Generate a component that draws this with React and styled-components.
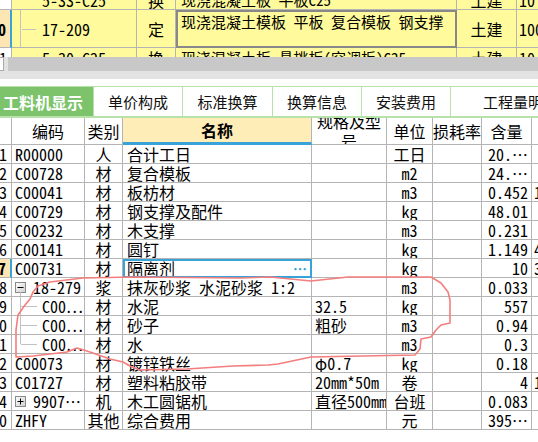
import React from 'react';
import styled, { createGlobalStyle, css } from 'styled-components';

const Global = createGlobalStyle`
  html, body { margin: 0; padding: 0; background: #fff; overflow: hidden; }
  body {
    font-family: "Noto Sans Mono CJK SC", "Noto Sans CJK SC", "DejaVu Sans Mono", monospace;
    font-size: 16px;
    color: #000;
  }
  * { box-sizing: border-box; }
`;

const GRID = '#b4b4b4';
const BLUE = '#38a2d9';

const Page = styled.div`
  position: relative;
  width: 538px;
  height: 442px;
  overflow: hidden;
  background: #fff;
`;

/* ---------- top (quota rows) ---------- */
const TopArea = styled.div`
  height: 57px;
  overflow: hidden;
`;
const TopInner = styled.div`
  margin-top: -10px;
`;
const TopRow = styled.div`
  display: grid;
  grid-template-columns: 12px 125px 39px 281px 60px 80px;
  height: ${p => p.$h}px;
  background: #fffb9c;
`;
const TopCell = styled.div`
  position: relative;
  display: flex;
  align-items: ${p => (p.$top ? 'flex-start' : 'center')};
  justify-content: ${p => (p.$align === 'center' ? 'center' : p.$align === 'right' ? 'flex-end' : 'flex-start')};
  padding: ${p => (p.$top ? '3px 4px' : '0 2px')};
  padding-left: ${p => (p.$pl != null ? p.$pl : 2)}px;
  border-right: 1px solid ${GRID};
  border-bottom: 1px solid ${GRID};
  white-space: nowrap;
  overflow: hidden;
  font-size: ${p => p.$fs || 16}px;
  line-height: 18px;
  ${p => p.$framed && css`
    outline: 2px solid #888;
    outline-offset: -2px;
  `}
`;
const RowNum = styled.div`
  display: flex;
  align-items: center;
  justify-content: flex-end;
  padding-right: 4px;
  white-space: nowrap;
  overflow: hidden;
  background: ${p => (p.$sel ? '#fde6b3' : '#fff')};
  font-weight: ${p => (p.$sel ? 700 : 400)};
  border-right: ${p => (p.$sel ? `2px solid ${BLUE}` : `1px solid ${GRID}`)};
  border-bottom: 1px solid ${GRID};
  line-height: 18px;
`;

/* ---------- scroll bar ---------- */
const HScroll = styled.div`
  display: flex;
  height: 14px;
  background: #e2e2e2;
`;
const ScrollStub = styled.div`
  width: 4px;
  background: #fff;
  border: 1px solid #a8a8a8;
  border-left: none;
`;
const ScrollThumb = styled.div`
  flex: 1;
  margin-left: 4px;
  background: #c8c8c8;
`;
const Band = styled.div`
  height: 8px;
  background: #e3e3e3;
`;
const Gap = styled.div`
  height: 7px;
  background: #fff;
`;

/* ---------- tabs ---------- */
const TabBar = styled.div`
  display: flex;
  height: 32px;
  border-top: 1px solid #b7e3aa;
  border-bottom: 2px solid #b7e3aa;
  white-space: nowrap;
  overflow: hidden;
`;
const Tab = styled.div`
  flex: 0 0 ${p => p.$w}px;
  display: flex;
  align-items: center;
  justify-content: ${p => (p.$active ? 'flex-start' : 'center')};
  padding-left: ${p => (p.$active ? 3 : 0)}px;
  font-family: "Noto Sans CJK SC", sans-serif;
  font-size: ${p => (p.$active ? 16 : 15)}px;
  font-weight: ${p => (p.$active ? 700 : 400)};
  color: ${p => (p.$active ? '#fff' : '#111')};
  background: ${p => (p.$active ? '#7cc36c' : '#fff')};
  border-right: 1px solid #b7e3aa;
`;

/* ---------- material table ---------- */
const COLS = '12px 73px 38px 189px 75px 46px 49px 50px 80px';

const Row = styled.div`
  display: grid;
  grid-template-columns: ${COLS};
  height: ${p => p.$h || 19}px;
`;
const Cell = styled.div`
  position: relative;
  display: flex;
  align-items: center;
  justify-content: ${p => (p.$align === 'center' ? 'center' : p.$align === 'right' ? 'flex-end' : 'flex-start')};
  padding-left: ${p => p.$pl || 0}px;
  padding-right: ${p => p.$pr || 0}px;
  border-right: 1px solid ${GRID};
  border-bottom: 1px solid ${GRID};
  white-space: nowrap;
  overflow: hidden;
  line-height: 18px;
  background: #fff;
`;
const HeadCell = styled(Cell)`
  justify-content: center;
  white-space: ${p => (p.$wrap ? 'normal' : 'nowrap')};
  text-align: center;
  line-height: 20px;
  padding: 0 ${p => (p.$wrap ? 2 : 0)}px;
  ${p => p.$key && css`
    background: #ffedb8;
    font-weight: 700;
    border-bottom: 3px solid ${BLUE};
  `}
`;
const NameCell = styled(Cell)`
  padding-left: 4px;
  justify-content: space-between;
  ${p => p.$sel && css`
    outline: 2px solid ${BLUE};
    outline-offset: -2px;
    padding-right: 4px;
  `}
`;
const MoreDots = styled.span`
  color: ${BLUE};
  font-size: 14px;
  font-weight: 700;
`;
const CodeCell = styled(Cell)`
  padding-left: ${p => (p.$child ? 30 : 3)}px;
  ${p => p.$child && css`
    &::before {
      content: '';
      position: absolute;
      left: 8px;
      top: 0;
      height: ${p.$last ? '50%' : '100%'};
      border-left: 1px solid #c2c2c2;
    }
    &::after {
      content: '';
      position: absolute;
      left: 9px;
      top: 50%;
      width: 16px;
      border-top: 1px solid #c2c2c2;
    }
  `}
  ${p => p.$open && css`
    &::after {
      content: '';
      position: absolute;
      left: 8px;
      top: 14px;
      bottom: 0;
      border-left: 1px solid #c2c2c2;
    }
  `}
`;
const TopCodeCell = styled(TopCell)`
  padding-left: 30px;
  &::before {
    content: '';
    position: absolute;
    left: 8px;
    top: 0;
    bottom: 0;
    border-left: 1px solid #c2c2c2;
  }
  &::after {
    content: '';
    position: absolute;
    left: 10px;
    top: 50%;
    width: 14px;
    border-top: 1px solid #c2c2c2;
  }
`;
const BoxIcon = styled.svg`
  flex: 0 0 11px;
  margin-right: ${p => p.$gap}px;
`;

const Overlay = styled.svg`
  position: absolute;
  left: 0;
  top: 0;
  pointer-events: none;
`;

function ToggleBox({ plus, gap }) {
  return (
    <BoxIcon $gap={gap} width="11" height="11" viewBox="0 0 11 11">
      <defs>
        <linearGradient id={plus ? 'gp' : 'gm'} x1="0" y1="0" x2="1" y2="1">
          <stop offset="0" stopColor="#ffffff" />
          <stop offset="1" stopColor="#cfcfcf" />
        </linearGradient>
      </defs>
      <rect x="0.5" y="0.5" width="10" height="10" fill={`url(#${plus ? 'gp' : 'gm'})`} stroke="#8a8a8a" />
      <line x1="2.5" y1="5.5" x2="8.5" y2="5.5" stroke="#000" />
      {plus && <line x1="5.5" y1="2.5" x2="5.5" y2="8.5" stroke="#000" />}
    </BoxIcon>
  );
}

const rows = [
  { n: '1', code: 'R00000', type: '人', name: '合计工日', spec: '', unit: '工日', qty: '20.⋯' },
  { n: '2', code: 'C00728', type: '材', name: '复合模板', spec: '', unit: 'm2', qty: '24.⋯' },
  { n: '3', code: 'C00041', type: '材', name: '板枋材', spec: '', unit: 'm3', qty: '0.452', next: '1' },
  { n: '4', code: 'C00729', type: '材', name: '钢支撑及配件', spec: '', unit: 'kg', qty: '48.01' },
  { n: '5', code: 'C00232', type: '材', name: '木支撑', spec: '', unit: 'm3', qty: '0.231' },
  { n: '6', code: 'C00141', type: '材', name: '圆钉', spec: '', unit: 'kg', qty: '1.149', next: '4' },
  { n: '7', code: 'C00731', type: '材', name: '隔离剂', spec: '', unit: 'kg', qty: '10', next: '3', sel: true },
  { n: '8', code: '18-279', type: '浆', name: '抹灰砂浆 水泥砂浆 1:2', spec: '', unit: 'm3', qty: '0.033', box: 'minus' },
  { n: '9', code: 'C00⋯', type: '材', name: '水泥', spec: '32.5', unit: 'kg', qty: '557', child: true },
  { n: '10', code: 'C00⋯', type: '材', name: '砂子', spec: '粗砂', unit: 'm3', qty: '0.94', child: true },
  { n: '11', code: 'C00⋯', type: '材', name: '水', spec: '', unit: 'm3', qty: '0.3', child: true, last: true },
  { n: '12', code: 'C00073', type: '材', name: '镀锌铁丝', spec: 'φ0.7', unit: 'kg', qty: '0.18' },
  { n: '13', code: 'C01727', type: '材', name: '塑料粘胶带', spec: '20mm*50m', unit: '卷', qty: '4', next: '1' },
  { n: '14', code: '9907⋯', type: '机', name: '木工圆锯机', spec: '直径500mm', unit: '台班', qty: '0.083', box: 'plus' },
  { n: '20', code: 'ZHFY', type: '其他', name: '综合费用', spec: '', unit: '元', qty: '395⋯' },
];

const tabs = ['工料机显示', '单价构成', '标准换算', '换算信息', '安装费用', '工程量明细'];
const tabW = [94, 89, 90, 89, 89, 140];

const redPath =
  'M30,299 L33,292 L38,286 L50,282 L83,278 L133,277 L240,278 L270,277 L311,281 L348,277 L431,277 ' +
  'L441,283 L448,292 L450,300 L450,323 L441,325 L436,330 L431,337 L421,339 L420,349 L415,355 ' +
  'L311,357 L278,364 L268,365 L233,366 L187,369 L140,370 L130,366 L123,362 L110,359 L87,351 ' +
  'L77,348 L67,352 L33,356 L16,357 L16,330 L18,315 L25,305 L30,299';

export default function App() {
  return (
    <Page>
      <Global />
      <TopArea>
        <TopInner>
          <TopRow $h={20}>
            <RowNum />
            <TopCell $pl={30}>5-33-C25</TopCell>
            <TopCell $align="center">换</TopCell>
            <TopCell $pl={5} $fs={15}>现浇混凝土板 平板C25</TopCell>
            <TopCell $align="center">土建</TopCell>
            <TopCell>10</TopCell>
          </TopRow>
          <TopRow $h={38}>
            <RowNum $sel>10</RowNum>
            <TopCodeCell>17-209</TopCodeCell>
            <TopCell $align="center">定</TopCell>
            <TopCell $top $framed $fs={15} $pl={5}>现浇混凝土模板 平板 复合模板 钢支撑</TopCell>
            <TopCell $align="center">土建</TopCell>
            <TopCell>100</TopCell>
          </TopRow>
          <TopRow $h={20}>
            <RowNum>11</RowNum>
            <TopCell $pl={30}>5-30-C25</TopCell>
            <TopCell $align="center">换</TopCell>
            <TopCell $pl={5} $fs={15}>现浇混凝土板 悬挑板(空调板)C25</TopCell>
            <TopCell $align="center">土建</TopCell>
            <TopCell>10</TopCell>
          </TopRow>
        </TopInner>
      </TopArea>

      <HScroll>
        <ScrollStub />
        <ScrollThumb />
      </HScroll>
      <Band />
      <Gap />

      <TabBar>
        {tabs.map((t, i) => (
          <Tab key={t} $w={tabW[i]} $active={i === 0}>{t}</Tab>
        ))}
      </TabBar>

      <Row $h={27}>
        <HeadCell />
        <HeadCell>编码</HeadCell>
        <HeadCell>类别</HeadCell>
        <HeadCell $key>名称</HeadCell>
        <HeadCell $wrap>规格及型号</HeadCell>
        <HeadCell>单位</HeadCell>
        <HeadCell>损耗率</HeadCell>
        <HeadCell>含量</HeadCell>
        <HeadCell />
      </Row>

      {rows.map((r, i) => (
        <Row key={i}>
          <RowNum $sel={r.sel}>{r.n}</RowNum>
          <CodeCell $child={r.child} $last={r.last} $open={r.box === 'minus'}>
            {r.box && <ToggleBox plus={r.box === 'plus'} gap={7} />}
            {r.code}
          </CodeCell>
          <Cell $align="center">{r.type}</Cell>
          <NameCell $sel={r.sel}>
            <span>{r.name}</span>
            {r.sel && <MoreDots>⋯</MoreDots>}
          </NameCell>
          <Cell $pl={3}>{r.spec}</Cell>
          <Cell $align="center">{r.unit}</Cell>
          <Cell />
          <Cell $align="right" $pr={3}>{r.qty}</Cell>
          <Cell $pl={2}>{r.next || ''}</Cell>
        </Row>
      ))}

      <Overlay width="538" height="442" viewBox="0 0 538 442">
        <path d={redPath} fill="none" stroke="#f47d7d" strokeWidth="1.6" strokeLinejoin="round" strokeLinecap="round" />
      </Overlay>
    </Page>
  );
}
